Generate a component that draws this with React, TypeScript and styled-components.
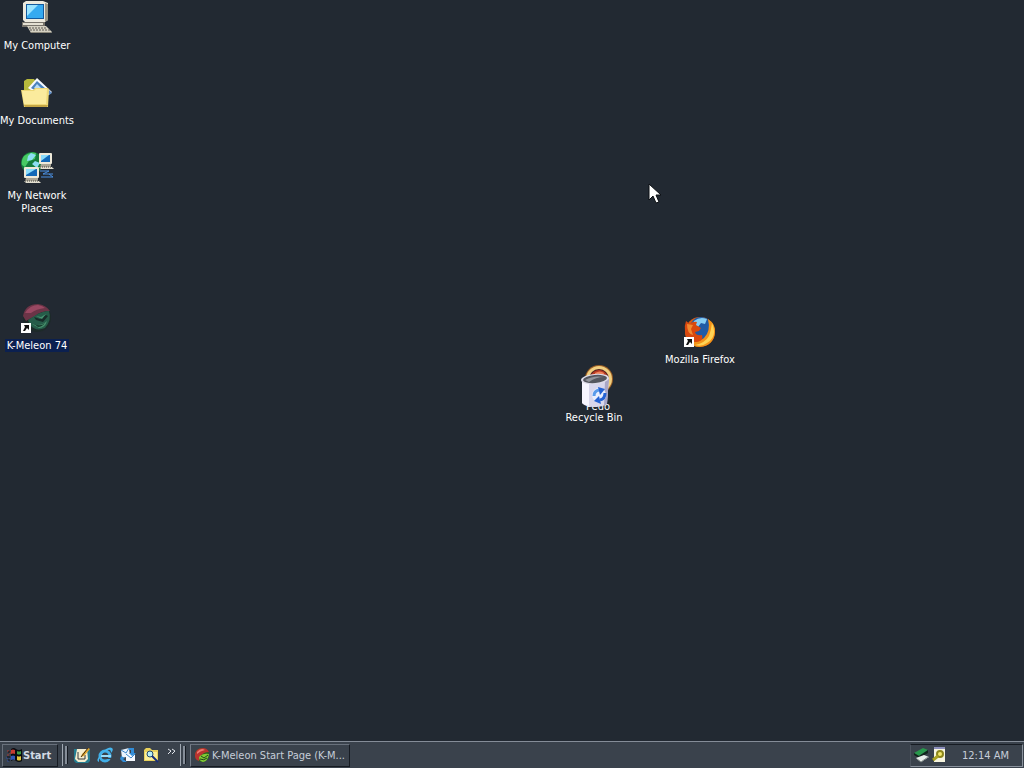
import React from "react";
import styled, { createGlobalStyle } from "styled-components";

const Global = createGlobalStyle`
  * { box-sizing: border-box; }
  html, body { margin: 0; height: 100%; overflow: hidden; }
  body { background: #222932; }
  body, button {
    font-family: "DejaVu Sans Condensed", "Noto Sans", sans-serif;
    font-size: 11px;
    line-height: 13px;
    color: #fff;
  }
`;

const Screen = styled.div`
  display: flex;
  flex-direction: column;
  height: 100vh;
`;

const Desktop = styled.main`
  position: relative;
  flex: 1;
  overflow: hidden;
  background: #222932;
`;

const Shortcut = styled.button<{ $x: number; $y: number }>`
  position: absolute;
  left: ${(p) => p.$x}px;
  top: ${(p) => p.$y}px;
  width: 74px;
  padding: 0;
  border: 0;
  background: none;
  display: flex;
  flex-direction: column;
  align-items: center;
  gap: 4px;
`;

const Caption = styled.span<{ $selected?: boolean }>`
  padding: 0 2px;
  margin: 0 -8px;
  text-align: center;
  white-space: pre-line;
  background: ${(p) => (p.$selected ? "#0b2050" : "transparent")};
`;

const Picture = styled.svg`
  display: block;
  width: 34px;
  height: 34px;
  flex: none;
`;

const Pointer = styled.svg`
  position: absolute;
  left: 648px;
  top: 183px;
  width: 14px;
  height: 24px;
`;

const Taskbar = styled.footer`
  display: flex;
  align-items: center;
  height: 27px;
  padding: 0 1px 0 2px;
  background: #3a424c;
  border-top: 1px solid #858d98;
`;

const StartButton = styled.button`
  display: flex;
  align-items: center;
  gap: 1px;
  height: 23px;
  width: 56px;
  padding: 0 3px;
  background: #3a424c;
  border: 1px solid;
  border-color: #69717c #161b22 #161b22 #69717c;
  color: #d3dae4;
  font-weight: bold;
`;

const Grip = styled.div`
  display: flex;
  align-items: center;
  gap: 2px;
  margin-left: 4px;
  height: 22px;
  &::before { content: ""; width: 1px; height: 22px; background: #a0a8b2; }
  &::after { content: ""; width: 2px; height: 18px; background: #858d98; border-right: 1px solid #161b22; }
`;

const QuickLaunch = styled.nav`
  display: flex;
  align-items: center;
  gap: 7px;
  margin-left: 6px;
`;

const QuickButton = styled.button`
  padding: 0;
  border: 0;
  background: none;
  display: block;
`;

const MoreButton = styled(QuickButton)`
  display: flex;
  align-items: flex-start;
  width: 10px;
  height: 14px;
`;

const SmallPicture = styled.svg`
  display: block;
  width: 16px;
  height: 16px;
  flex: none;
`;

const Chevrons = styled.svg`
  display: block;
  width: 10px;
  height: 8px;
`;

const Task = styled.button`
  display: flex;
  align-items: center;
  gap: 2px;
  width: 160px;
  height: 23px;
  margin-left: 4px;
  padding: 0 3px;
  background: #3a424c;
  border: 1px solid;
  border-color: #69717c #161b22 #161b22 #757d88;
  color: #c6cdd8;
  white-space: nowrap;
`;

const Tray = styled.section`
  display: flex;
  align-items: center;
  gap: 2px;
  width: 113px;
  height: 23px;
  margin-left: auto;
  padding: 0 13px 0 2px;
  border: 1px solid;
  border-color: #161b22 #8a929d #8a929d #4d5560;
`;

const Clock = styled.time`
  margin-left: auto;
  color: #c6cdd8;
  white-space: nowrap;
`;

const ShortcutArrow = () => (
  <g>
    <rect x="1" y="22" width="10" height="10" fill="#fff" />
    <path d="M4 24h5v5l-2-2-2 3H3l2-4z" fill="#111" />
  </g>
);

const ComputerArt = () => (
  <g>
    <path d="M3 2l3-2h17l5 2v17l-3 2H5l-2-2z" fill="#ece9dd" />
    <path d="M25 2l3 1v16l-3 2z" fill="#9b9685" />
    <path d="M6 3h18v15H6z" fill="#135a9e" />
    <path d="M7 4h16v13H7z" fill="#35aaf0" />
    <path d="M7 4h11L7 15z" fill="#9be4ff" />
    <path d="M2 21h23v5H2z" fill="#77736a" />
    <path d="M3 22h20v2H3z" fill="#e4e0d2" />
    <path d="M7 25h19l6 6-1 1H11z" fill="#d5d1c2" />
    <path d="M9 27h18M10 29h20" stroke="#5c5952" strokeDasharray="2 1" />
    <path d="M11 31h20v1H11z" fill="#8d897c" />
  </g>
);

const DocumentsArt = () => (
  <g>
    <path d="M4 5l3-2h7l2 3v8H4z" fill="#b6b93c" />
    <path d="M8 12L17 2l15 14-8 7z" fill="#f6f9ff" />
    <path d="M11 12l6-7 9 8-4 5z" fill="#4a82bd" />
    <path d="M14 12l3-4 6 6z" fill="#b8dcf5" />
    <path d="M27 12l5 5-3 2z" fill="#608fca" />
    <path d="M1 14h12l2-2h13l1 2-1 17H4z" fill="#eed877" />
    <path d="M2 15h12l2-2h11l-1 15H4z" fill="#fbeb9d" />
    <path d="M4 29h24l-1 2H5z" fill="#c5a644" />
  </g>
);

const Monitor = ({ x, y, w }: { x: number; y: number; w: number }) => (
  <g transform={`translate(${x} ${y})`}>
    <rect width={w} height="11" rx="1" fill="#eee9d9" />
    <rect x="2" y="2" width={w - 4} height="7" fill="#1268b7" />
    <path d={`M2 2h${w - 5}L2 8z`} fill="#8adcfc" />
    <path d={`M2 11h${w - 3}v3H1z`} fill="#aaa596" />
    <path d={`M0 14h${w}l2 2H2z`} fill="#e2decf" />
    <path d={`M1 14h${w}`} stroke="#474640" strokeDasharray="1 1" />
  </g>
);

const NetworkArt = () => (
  <g>
    <circle cx="12" cy="12" r="11" fill="#147c3c" />
    <path d="M4 5q7-5 12-3l-1 6-6 2-4 6-3-2q-1-5 2-9z" fill="#48c963" />
    <path d="M11 2l5 2-4 5-5 1 1-5zM15 10l5 2-3 5-5-4z" fill="#8cdef2" />
    <Monitor x={19} y={2} w={13} />
    <Monitor x={4} y={16} w={15} />
    <path d="M20 20h9l-6 3h10M21 26h12l-4-3" fill="none" stroke="#4b90e2" />
  </g>
);

const MeleonArt = () => (
  <g>
    <circle cx="17" cy="17" r="14" fill="#1d2a29" />
    <path d="M3 15Q5 3 18 3q8 1 12 7-9 0-15 5l-9 5z" fill="#6b3447" />
    <path d="M5 12Q10 4 18 4q5 1 7 3-9 1-14 5z" fill="#994862" />
    <path d="M8 19l8-5q7-4 13-4 3 9-4 17-9 4-15-3z" fill="#265c49" />
    <path d="M14 16l6 2 6-4 2 1-5 6-7-2z" fill="#172b28" />
    <path d="M16 15l5 1 5-3-4 5z" fill="#46906f" />
    <path d="M12 23q9 3 15-3-2 7-8 7z" fill="#47916c" />
    <path d="M14 23q7 3 11-1-3 4-7 4z" fill="#173d2f" />
    <ShortcutArrow />
  </g>
);

const FirefoxArt = () => (
  <g>
    <circle cx="17" cy="17" r="15" fill="#db5a10" />
    <circle cx="18" cy="13" r="11" fill="#205ba5" />
    <path d="M11 6q6-5 13-2l-2 5-4-1-3 4-5-3z" fill="#86cdf3" />
    <path d="M25 4q8 5 7 14-2 13-15 14-8 0-12-6 10 3 16-3 7-7 4-19z" fill="#f39318" />
    <path d="M29 8q6 13-5 20-5 4-12 2 10-2 14-9 2-5 3-13z" fill="#ffd455" />
    <path d="M3 6l4 3q3-3 7-2l-1 3 5 3-2 3-4 1q1 4 7 3 2 6-6 7Q3 26 2 17q-1-6 1-11z" fill="#d9480e" />
    <path d="M4 9l6 1-2 4 2 6q-6-1-6-11z" fill="#f18a32" />
    <ShortcutArrow />
  </g>
);

const PedoArt = () => (
  <g>
    <circle cx="18" cy="17" r="14" fill="#9c5f25" />
    <circle cx="18" cy="17" r="13" fill="#f1cf80" />
    <circle cx="18" cy="17" r="10" fill="#4d211f" />
    <path d="M9 15q3-7 9-7t9 7v6H9z" fill="#b93a22" />
    <path d="M14 11q5-3 9 0l-1 4h-8z" fill="#ee835b" />
  </g>
);

const BinArt = () => (
  <g>
    <path d="M5 6v24q3 4 12 4 9 0 13-3l2-26z" fill="#d9d7ec" />
    <path d="M5 8v22q2 2 7 3V11z" fill="#f7f6ff" />
    <path d="M28 8l4-3-2 26-3 2z" fill="#a9a6c6" />
    <ellipse cx="18" cy="6" rx="14" ry="5" transform="rotate(-5 18 6)" fill="#dedce9" />
    <ellipse cx="18" cy="6" rx="12" ry="4" transform="rotate(-5 18 6)" fill="#54565e" />
    <path d="M8 7q9-5 19-3-8 0-15 5z" fill="#92949b" />
    <circle cx="22" cy="22" r="7" fill="#e9efff" />
    <path d="M17 23q0-5 5-6" fill="none" stroke="#5a9bea" strokeWidth="3" />
    <path d="M21 14l7 2-5 6z" fill="#2462d4" />
    <path d="M28 20q0 6-5 7" fill="none" stroke="#2462d4" strokeWidth="3" />
    <path d="M24 31l-7-3 5-5z" fill="#2462d4" />
  </g>
);

const MeleonSmall = () => (
  <SmallPicture viewBox="0 0 16 16">
    <circle cx="8" cy="8" r="7" fill="#25651e" />
    <path d="M1 9Q1 1 9 1q4 0 6 4-6 0-9 5l-1 4Q1 13 1 9z" fill="#b8332f" />
    <path d="M3 5q4-5 8-2-5 1-8 4z" fill="#ed7970" />
    <path d="M5 10q4-4 10-3-1 7-6 8-4-1-4-5z" fill="#82c934" />
    <path d="M7 9l3 2 4-3M6 12q4 2 7-1" fill="none" stroke="#21451b" />
  </SmallPicture>
);

type Item = { name: string; x: number; y: number; Art: () => React.ReactElement; selected?: boolean };

const items: Item[] = [
  { name: "My Computer", x: 0, y: 1, Art: ComputerArt },
  { name: "My Documents", x: 0, y: 76, Art: DocumentsArt },
  { name: "My Network\nPlaces", x: 0, y: 151, Art: NetworkArt },
  { name: "K-Meleon 74", x: 0, y: 301, Art: MeleonArt, selected: true },
  { name: "Mozilla Firefox", x: 663, y: 315, Art: FirefoxArt },
  { name: "Pedo", x: 561, y: 362, Art: PedoArt },
  { name: "Recycle Bin", x: 557, y: 373, Art: BinArt },
];

export default function App() {
  return (
    <Screen>
      <Global />
      <Desktop>
        {items.map(({ name, x, y, Art, selected }) => (
          <Shortcut key={name} $x={x} $y={y}>
            <Picture viewBox="0 0 34 34"><Art /></Picture>
            <Caption $selected={selected}>{name}</Caption>
          </Shortcut>
        ))}
        <Pointer viewBox="0 0 14 24">
          <path d="M1 1v16l4-4 3 7 3-1-3-7h5z" fill="#fff" stroke="#0b0e12" />
        </Pointer>
      </Desktop>
      <Taskbar>
        <StartButton>
          <SmallPicture viewBox="0 0 16 16">
            <path d="M5 2q3-2 5 0 3 2 6 0v12q-3 2-6 0-2-2-5 0z" fill="#090c10" />
            <path d="M1 4h2M3 6h2M1 8h2" stroke="#a8382f" strokeWidth="1" />
            <path d="M0 11h2M3 12h2M1 14h2" stroke="#2c4ca0" strokeWidth="1" />
            <path d="M2 5h2M1 10h3M2 13h2" stroke="#0c0f14" strokeWidth="1" />
            <path d="M5 3q2-1 4 0v4q-2-1-4 0z" fill="#c73b30" />
            <path d="M11 4q2 1 4 0v3q-2 1-4 0z" fill="#3b9b45" />
            <path d="M5 9q2-1 4 0v4q-2-1-4 0z" fill="#3157b5" />
            <path d="M11 9q2 1 4 0v4q-2 1-4 0z" fill="#e0c43c" />
          </SmallPicture>
          Start
        </StartButton>
        <Grip />
        <QuickLaunch aria-label="Quick launch">
          <QuickButton aria-label="Show desktop">
            <SmallPicture viewBox="0 0 16 16">
              <path d="M0 2h16v12l-2 2H2l-2-2z" fill="#267d91" />
              <path d="M3 2h10l1 10-3 3H4l-3-3z" fill="#f5edcf" />
              <path d="M4 5v7h7V8" fill="none" stroke="#33383a" />
              <path d="M7 10l1-3 6-6 2 1-6 7z" fill="#e1a52c" />
              <path d="M7 10l7-9" stroke="#402f16" />
            </SmallPicture>
          </QuickButton>
          <QuickButton aria-label="Internet Explorer">
            <SmallPicture viewBox="0 0 16 16">
              <circle cx="8" cy="9" r="5" fill="none" stroke="#40aee8" strokeWidth="3" />
              <path d="M4 9h10" stroke="#9addfa" strokeWidth="2" />
              <path d="M10 11h5v1h-5z" fill="#3a424c" />
              <path d="M2 15Q-2 14 4 7q7-8 11-6 2 2-1 5 0-4-3-3-5 1-9 9z" fill="#45b5ed" />
            </SmallPicture>
          </QuickButton>
          <QuickButton aria-label="Outlook Express">
            <SmallPicture viewBox="0 0 16 16">
              <path d="M1 3l8-2 1 8-8 2z" fill="#e8f3ff" />
              <path d="M1 3l5 3 3-5" fill="none" stroke="#3d87ca" />
              <path d="M6 7h9v7H6z" fill="#f5f9ff" />
              <path d="M6 7l5 4 4-4" fill="none" stroke="#3d87ca" />
              <path d="M9 1h5v5h2l-4 3-3-3h2V3H9zM1 9l4 2-2 1 4 3H3L0 12z" fill="#318cd7" />
            </SmallPicture>
          </QuickButton>
          <QuickButton aria-label="Search">
            <SmallPicture viewBox="0 0 16 16">
              <path d="M1 3l2-2h4l2 2h6v11H1z" fill="#e8d15c" />
              <path d="M2 5h12v8H2z" fill="#fbef98" />
              <circle cx="7" cy="7" r="3" fill="#b9eef5" stroke="#22496f" />
              <path d="M9 9l6 6" stroke="#172d7b" strokeWidth="2" />
            </SmallPicture>
          </QuickButton>
          <MoreButton aria-label="More programs">
            <Chevrons viewBox="0 0 10 8">
              <path d="M2 1l3 2-3 3M6 1l3 2-3 3" fill="none" stroke="#e1e5eb" />
            </Chevrons>
          </MoreButton>
        </QuickLaunch>
        <Grip />
        <Task><MeleonSmall />K-Meleon Start Page (K-M...</Task>
        <Tray aria-label="Notification area">
          <SmallPicture viewBox="0 0 16 16">
            <path d="M1 6l9-5 5 2-9 6z" fill="#28984c" />
            <path d="M1 6l5 3 9-6v3l-9 5-5-3z" fill="#10251b" />
            <path d="M3 11l8-3 5 2-8 5z" fill="#e9eeeb" />
            <path d="M4 12l4 3 7-5" fill="none" stroke="#858e8b" />
          </SmallPicture>
          <SmallPicture viewBox="0 0 16 16">
            <path d="M3 0h11v15H3z" fill="#f7f5df" />
            <path d="M3 0h11v2H3z" fill="#8c8fbd" />
            <circle cx="9" cy="7" r="3" fill="#f4e96b" stroke="#8c861c" strokeWidth="2" />
            <path d="M7 9l-5 4" stroke="#aaa322" strokeWidth="3" />
          </SmallPicture>
          <Clock>12:14 AM</Clock>
        </Tray>
      </Taskbar>
    </Screen>
  );
}
